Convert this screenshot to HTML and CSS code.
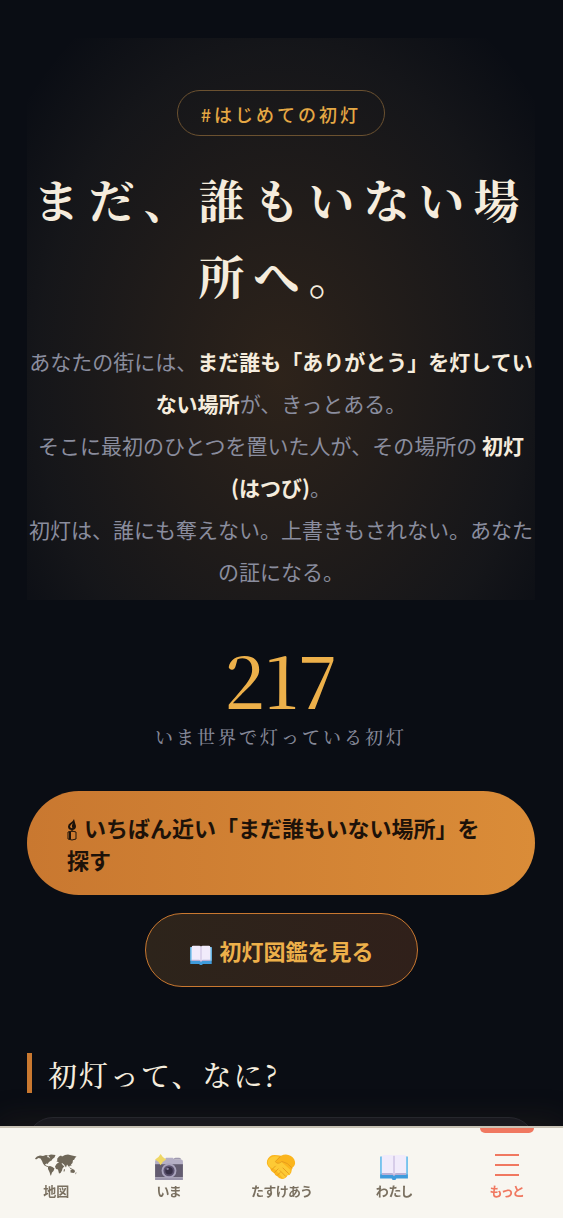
FILE: index.html
```
<!DOCTYPE html>
<html lang="ja">
<head>
    <meta charset="UTF-8">
    <meta name="viewport" content="width=device-width, initial-scale=1">
    <title>はじめての初灯</title>
    <link rel="stylesheet" href="styles.css">
</head>
<body>
<!-- 本のアイコン -->
<svg class="defs" aria-hidden="true">
    <symbol id="book" viewBox="0 0 32 28">
        <path fill="#3f9bdc" d="M1 3h30v23.500H18.500l-1 1.500h-3l-1-1.500H1z"/>
        <path fill="#7cc5ee" d="M1 3h30v19H1z"/>
        <path fill="#b9b0d6" d="M3 20h26v2.500H17.500L16 24l-1.500-1.500H3z"/>
        <path fill="#f1ebfb" d="M5 1h8.500Q16 1 16 3v19q-1-1.500-3-1.500H3V3q0-2 2-2zM27 1h-8.500Q16 1 16 3v19q1-1.500 3-1.500h10V3q0-2-2-2z"/>
        <path fill="#d5cbe8" d="M15 2h2v20h-2z"/>
    </symbol>
</svg>

<main class="page">
    <section class="hero">
        <span class="tag">#はじめての初灯</span>
        <h1>まだ、誰もいない場所へ。</h1>
        <p>
            あなたの街には、<strong>まだ誰も「ありがとう」を灯していない場所</strong>が、きっとある。<br>
            そこに最初のひとつを置いた人が、その場所の <strong>初灯(はつび)</strong>。<br>
            初灯は、誰にも奪えない。上書きもされない。あなたの証になる。
        </p>
    </section>

    <section class="count">
        <div class="num">217</div>
        <div class="label">いま世界で灯っている初灯</div>
    </section>

    <div class="actions">
        <button type="button" class="btn primary"><svg class="candle" viewBox="0 0 10 22" aria-hidden="true">
            <path d="M7 0Q8 4 9 7q0 4-4 4T1 7.500Q1 5 4 3.500 6 2 7 0z"/>
            <path class="hole" d="M6 4Q3 6 3 8q1 1.500 2.500 1Q4 7 6 4z"/>
            <path d="M4.500 10h1v3h-1z"/>
            <path class="line" d="M1 13q4-2 8 0v7q-4 2-8 0z"/>
            <path d="M2 13h2v7H2z"/>
        </svg> いちばん近い「まだ誰もいない場所」を探す</button>
        <button type="button" class="btn ghost"><svg class="mini-book" aria-hidden="true"><use href="#book"/></svg> 初灯図鑑を見る</button>
    </div>

    <section class="about">
        <h2>初灯って、なに?</h2>
        <div class="card"></div>
    </section>
</main>

<nav class="tabs">
    <a href="#map">
        <svg class="map" viewBox="0 0 42 26" aria-hidden="true">
            <path d="M0 4.500l2-2 3-1 3 .5 3-1 2 .5-1 1.500 2 .5 1.500 1.500 1.500 1-1.500 1-1.500 1-1.500 2-1-.5-1.500 1 1 1 1.500.5 1 1-1 0-3-1.500-1.500-2L7 7 5.500 4.500 3.500 4 1 5.500z"/>
            <path d="M13 1.500l3-1 4.500.5-1 2.500-2 1.500-1 1.500-1.500-2-.5-1.500zM13 12.500l2-.5 2.500 1 2 1.500-1 2.500-1.500 1.500-1 3-.5 0-1-3.500-1.500-3z"/>
            <path d="M21.500 10l2-1.500 3 .5 1.500 2.500 1.500.5-2 2.500-.5 2-1.500 2.500-1.500.5-1-4-2-.5-1-2.500zM21.500 7.500l1-1.500-.5-1 2-2.500 2-1 1 1 3-1.500 3-.5 4 1 4.500 1-1.500 1.500-1 2-1 0-.5 3-1.500 1.500.5 1.500-1.500-.5-1 1.500-2-2.500-1 3-2-3-2-1.500-1.500.5-2-1.500z"/>
            <path d="M35.500 16l2-1 2 1 .5 2-1.500 1-3-.5zM34 12.500l1.500 1.500 2 .5-2 .5zM29 15l1 .5-.5 2-1 0zM41 18l.5 1-1.500 1.500z"/>
        </svg>
        <span>地図</span>
    </a>
    <a href="#now">
        <svg class="camera" viewBox="0 0 32 28" aria-hidden="true">
            <path fill="#b5afc5" d="M1 8q0-2 2-2h8l2-2h7l2 2h7q2 0 2 2v5H1z"/>
            <path fill="#9f99ae" d="M21 6q0-2 2-2h4q2 0 2 2z"/>
            <path fill="#635c70" d="M1 11h30v14H1z"/>
            <path fill="#9a94ab" d="M1 25h30v3H1z"/>
            <circle cx="16" cy="18" r="8" fill="#aaa4bd"/>
            <circle cx="16" cy="18" r="6" fill="#5b526f"/>
            <circle cx="16" cy="18" r="4" fill="#373047"/>
            <circle cx="14.500" cy="16" r="1.300" fill="#8b83a0"/>
            <path fill="#efd765" d="M7 0q2 4 6 6-4 2-6 6-2-4-6-6 4-2 6-6z"/>
        </svg>
        <span>いま</span>
    </a>
    <a href="#help">
        <svg class="hands" viewBox="0 0 32 28" aria-hidden="true">
            <path fill="#fbb51d" d="M1 7q2-6 8-6 4 0 7 1 4-2 8-1 6 2 7 7 1 4-3 7l-1 5q-1 3-4 3-2 4-6 4-3 0-5-3-3-1-3-3-4-2-5-6-4-3-3-8z"/>
            <path fill="#fdca35" d="M2 7q4-6 12-4l-4 6q3 2 6-1l10 9q1 3-1 5l-3 1q-1 4-4 3l-8-9-6-3Q1 11 2 7z"/>
            <path fill="none" stroke="#e59a1c" stroke-linecap="round" d="M15 3l-5 5q2 4 7 0 6 1 11 7M6 17l4-4M9 20l4-4M12 23l3-3M18 15l6 6M15 18l6 6"/>
        </svg>
        <span>たすけあう</span>
    </a>
    <a href="#me">
        <svg class="book" aria-hidden="true"><use href="#book"/></svg>
        <span>わたし</span>
    </a>
    <a href="#more" class="current">
        <svg class="more" viewBox="0 0 24 26" aria-hidden="true">
            <path d="M0 1h24M0 11h24M0 21h24"/>
        </svg>
        <span>もっと</span>
    </a>
</nav>
</body>
</html>
```
FILE: styles.css
```
* {
    margin: 0;
    padding: 0;
    box-sizing: border-box;
}

body {
    background-color: #0a0d14;
    color: #f5ecdd;
    font-family: "Noto Sans CJK JP", sans-serif;
    min-height: 100vh;
}

.defs {
    position: absolute;
    width: 0;
    height: 0;
}

.page {
    padding: 38px 28px 92px 27px;
}

.hero {
    padding: 52px 0 8px;
    text-align: center;
    background: radial-gradient(ellipse at 50% 60%, rgba(232, 150, 60, .16), rgba(232, 190, 130, .05) 68%, transparent 92%);
}

.tag {
    display: inline-block;
    height: 46px;
    padding: 0 23px;
    border: 1px solid #6b5130;
    border-radius: 23px;
    color: #e5a844;
    font-size: 18px;
    font-weight: 500;
    line-height: 46px;
    letter-spacing: 3px;
}

h1, h2, .count {
    font-family: "Noto Serif CJK JP", "Noto Serif JP", "Liberation Serif", "Noto Sans CJK JP", serif;
}

h1 {
    margin: 24px 0 28px;
    font-size: 46px;
    font-weight: bold;
    line-height: 76px;
    letter-spacing: 9px;
}

.hero p {
    color: #8a8d9e;
    font-size: 21px;
    line-height: 42px;
}

.hero strong {
    color: #f5ecdd;
}

.count {
    padding-top: 36px;
    text-align: center;
}

.num {
    color: #edb04a;
    font-size: 71px;
    font-weight: 500;
    line-height: 84px;
}

.label {
    padding-top: 4px;
    color: #858898;
    font-size: 18px;
    font-weight: 500;
    line-height: 24px;
    letter-spacing: 3px;
}

.actions {
    display: flex;
    flex-direction: column;
    align-items: center;
    gap: 18px;
    padding-top: 43px;
}

.btn {
    border: 0;
    font-family: inherit;
    font-size: 22px;
    font-weight: bold;
    line-height: 32px;
    text-align: left;
    cursor: pointer;
}

.btn svg {
    margin-right: 2px;
}

.primary {
    width: 100%;
    padding: 20px 40px;
    border-radius: 52px;
    color: #1d1209;
    background: linear-gradient(90deg, #c97830, #da8c38);
}

.ghost {
    padding: 20px 43px;
    border: 1px solid #c97830;
    border-radius: 37px;
    color: #edb04a;
    background: linear-gradient(90deg, #2d241b, #30201a);
}

.candle {
    width: 10px;
    height: 22px;
    vertical-align: -4px;
    fill: #1d1209;
}

.candle .hole {
    fill: #cb7a31;
}

.candle .line {
    fill: none;
    stroke: #1d1209;
}

.mini-book {
    width: 24px;
    height: 20px;
    vertical-align: -5px;
}

.about {
    padding-top: 66px;
}

h2 {
    padding: 4px 0 0 16px;
    border-left: 5px solid #c97830;
    font-size: 29px;
    font-weight: 500;
    line-height: 36px;
    letter-spacing: 2px;
}

.card {
    height: 100px;
    margin-top: 24px;
    border: 1px solid #242631;
    border-radius: 26px;
    background-color: #151720;
}

/* 下部ナビ */
.tabs {
    position: fixed;
    left: 0;
    right: 0;
    bottom: 0;
    display: grid;
    grid-template-columns: repeat(5, 1fr);
    height: 92px;
    border-top: 2px solid #c9c3b6;
    background-color: #f8f6f0;
    box-shadow: 0 -6px 30px rgba(60, 45, 30, .3);
}

.tabs a {
    position: relative;
    display: flex;
    flex-direction: column;
    align-items: center;
    justify-content: flex-end;
    gap: 1px;
    padding-bottom: 17px;
    color: #7a7060;
    font-size: 13px;
    font-weight: bold;
    line-height: 20px;
    font-feature-settings: "palt";
    text-decoration: none;
}

.tabs .current {
    color: #f07860;
}

.tabs .current::before {
    content: "";
    position: absolute;
    top: 0;
    left: 50%;
    width: 54px;
    height: 5px;
    margin-left: -27px;
    border-radius: 0 0 5px 5px;
    background-color: #f07860;
}

.tabs svg {
    width: 32px;
    height: 26px;
}

.tabs .map {
    width: 42px;
    fill: #6f6758;
}

.tabs .more {
    width: 24px;
    fill: none;
    stroke: #f07860;
    stroke-width: 2;
}
```
